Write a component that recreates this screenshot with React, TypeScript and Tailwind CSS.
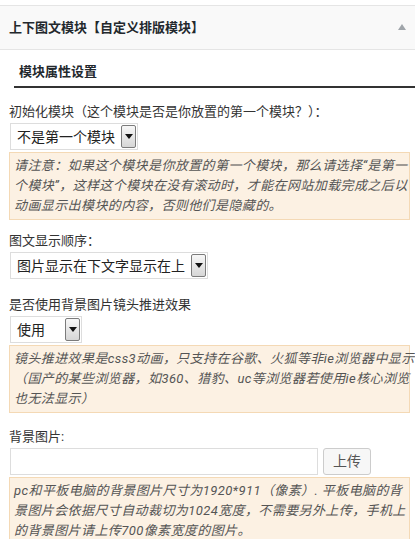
import React from 'react';

function Arrow() {
  return (
    <span className="flex h-full w-[15px] items-center justify-center rounded-[2px] border border-[#7b7b7b] bg-gradient-to-b from-[#f7f7f7] to-[#d6d6d6]">
      <svg width="8" height="5" viewBox="0 0 8 5">
        <path d="M0 0 L8 0 L4 5 Z" fill="#111" />
      </svg>
    </span>
  );
}

function FakeSelect({ value, width }: { value: string; width: string }) {
  return (
    <div className={`flex h-[27px] items-center justify-between border border-[#dddddd] bg-white py-px pl-[6px] pr-px ${width}`}>
      <span className="text-[14px] leading-none text-[#222]">{value}</span>
      <Arrow />
    </div>
  );
}

function Note({ lines }: { lines: string[] }) {
  return (
    <div className="border border-[#f4d9b5] bg-[#fcf1e3] px-[4px] py-[3px] text-[13px] italic leading-[20px] tracking-[0.4px] text-[#555]">
      {lines.map((l, i) => (
        <div key={i} className="whitespace-nowrap">
          {l}
        </div>
      ))}
    </div>
  );
}

function Label({ children }: { children: React.ReactNode }) {
  return <div className="text-[13px] leading-[20px] text-[#333]">{children}</div>;
}

export default function App() {
  return (
    <div className="min-h-screen bg-white pt-[5px] font-[Roboto,'Noto_Sans_CJK_SC',sans-serif]">
      {/* header */}
      <div className="flex h-[45px] items-center justify-between border-y border-[#e5e5e5] bg-[#f9f9f9] pl-[9px] pr-[9px]">
        <h2 className="text-[13px] font-bold text-[#23282d]">上下图文模块【自定义排版模块】</h2>
        <svg width="8" height="6" viewBox="0 0 8 6" className="mb-[2px]">
          <path d="M0 6 L4 0 L8 6 Z" fill="#a0a5aa" />
        </svg>
      </div>

      <div className="pl-[14px]">
        <div className="border-b-2 border-[#333] pb-[4px] pl-[5px] pt-[12px] text-[13px] font-bold leading-[20px] text-[#23282d]">
          模块属性设置
        </div>
      </div>

      <div className="pl-[9px] pr-[5px]">
        <div className="mt-[14px]">
          <Label>初始化模块（这个模块是否是你放置的第一个模块？）：</Label>
          <div className="ml-px mt-px">
            <FakeSelect value="不是第一个模块" width="w-[128px]" />
          </div>
          <div className="mt-[2px]">
            <Note
              lines={[
                '请注意：如果这个模块是你放置的第一个模块，那么请选择“是第一',
                '个模块”，这样这个模块在没有滚动时，才能在网站加载完成之后以',
                '动画显示出模块的内容，否则他们是隐藏的。',
              ]}
            />
          </div>
        </div>

        <div className="mt-[11px]">
          <Label>图文显示顺序：</Label>
          <div className="ml-px mt-[1px]">
            <FakeSelect value="图片显示在下文字显示在上" width="w-[198px]" />
          </div>
        </div>

        <div className="mt-[16px]">
          <Label>是否使用背景图片镜头推进效果</Label>
          <div className="ml-px mt-px">
            <FakeSelect value="使用" width="w-[72px]" />
          </div>
          <div className="mt-[2px]">
            <Note
              lines={[
                '镜头推进效果是css3动画，只支持在谷歌、火狐等非ie浏览器中显示',
                '（国产的某些浏览器，如360、猎豹、uc等浏览器若使用ie核心浏览',
                '也无法显示）',
              ]}
            />
          </div>
        </div>

        <div className="mt-[14px]">
          <Label>背景图片:</Label>
          <div className="ml-px mt-px flex items-center gap-[5px]">
            <input className="h-[27px] w-[308px] border border-[#dddddd] bg-white" />
            <button className="h-[27px] w-[48px] rounded-[3px] border border-[#cccccc] bg-[#f7f7f7] text-[14px] text-[#555]">
              上传
            </button>
          </div>
          <div className="mt-[2px]">
            <Note
              lines={[
                'pc和平板电脑的背景图片尺寸为1920*911（像素）. 平板电脑的背',
                '景图片会依据尺寸自动裁切为1024宽度，不需要另外上传，手机上',
                '的背景图片请上传700像素宽度的图片。',
              ]}
            />
          </div>
        </div>
      </div>
    </div>
  );
}
